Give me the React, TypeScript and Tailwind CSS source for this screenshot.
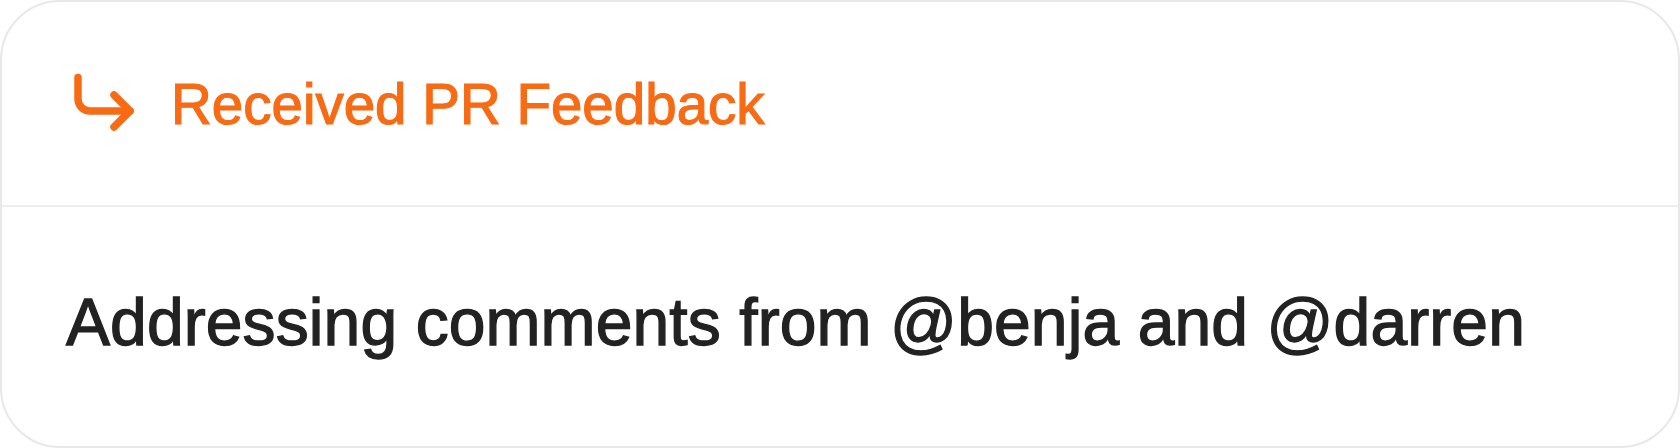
function ArrowCornerIcon() {
  return (
    <svg
      width="90"
      height="90"
      viewBox="0 0 90 90"
      fill="none"
      stroke="currentColor"
      strokeWidth="7.5"
      strokeLinecap="round"
      strokeLinejoin="round"
      className="shrink-0 text-[#f76b15]"
    >
      <path d="M18 17.5V39a12 12 0 0 0 12 12H70" />
      <path d="M54 35 70 51 54 67" />
    </svg>
  );
}

export default function App() {
  return (
    <div className="w-[1680px] h-[448px] bg-white" style={{ fontFamily: '"Liberation Sans", Arial, sans-serif' }}>
      <div className="flex flex-col h-full border-2 border-[#e8e8e8] rounded-[60px] overflow-hidden">
        {/* Header */}
        <div className="flex items-center h-[205px] pl-[58px] pt-[3px] gap-[21px] border-b-2 border-[#ededed]">
          <ArrowCornerIcon />
          <span className="text-[56.5px] leading-none text-[#f76b15] [-webkit-text-stroke:1.2px_#f76b15]">
            Received PR Feedback
          </span>
        </div>

        {/* Body */}
        <div className="flex flex-1 items-center pl-[64px] pb-[10px]">
          <p className="text-[66px] leading-none tracking-[0.1px] text-[#222222] [-webkit-text-stroke:1.3px_#222222]">
            Addressing comments from @benja and @darren
          </p>
        </div>
      </div>
    </div>
  );
}
